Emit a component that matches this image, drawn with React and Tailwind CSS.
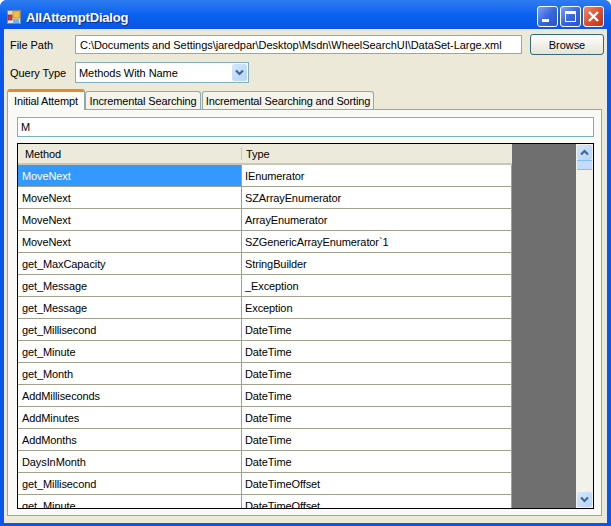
const rows = [
  ["MoveNext", "IEnumerator"],
  ["MoveNext", "SZArrayEnumerator"],
  ["MoveNext", "ArrayEnumerator"],
  ["MoveNext", "SZGenericArrayEnumerator`1"],
  ["get_MaxCapacity", "StringBuilder"],
  ["get_Message", "_Exception"],
  ["get_Message", "Exception"],
  ["get_Millisecond", "DateTime"],
  ["get_Minute", "DateTime"],
  ["get_Month", "DateTime"],
  ["AddMilliseconds", "DateTime"],
  ["AddMinutes", "DateTime"],
  ["AddMonths", "DateTime"],
  ["DaysInMonth", "DateTime"],
  ["get_Millisecond", "DateTimeOffset"],
  ["get_Minute", "DateTimeOffset"],
];

function AppIcon() {
  return (
    <svg width="14" height="14" viewBox="0 0 14 14" className="shrink-0">
      <rect x="0.5" y="0.5" width="13" height="13" fill="#e8e4d8" stroke="#7a86a8" />
      <rect x="1" y="1" width="12" height="3" fill="#f0dca0" />
      <rect x="6" y="1" width="7" height="7" fill="#f2c040" stroke="#b08a20" strokeWidth="0.7" />
      <rect x="1" y="5" width="4" height="5" fill="#d8382c" stroke="#8a2a20" strokeWidth="0.7" />
      <rect x="6" y="9" width="6" height="4" fill="#78b4e8" />
    </svg>
  );
}

function CapButton({ close, children }) {
  return (
    <div
      className={
        "w-[21px] h-[21px] rounded-[3px] border border-white flex items-center justify-center " +
        (close
          ? "bg-gradient-to-br from-[#e88a70] via-[#e0502c] to-[#c03010]"
          : "bg-gradient-to-br from-[#7f9ff0] via-[#3a66e0] to-[#2a50d0]")
      }
    >
      {children}
    </div>
  );
}

export default function App() {
  return (
    <div
      className="w-[611px] h-[526px] overflow-hidden flex flex-col bg-[#0a55ec] rounded-t-[7px] text-[11px] leading-[14px] tracking-[-0.05px] text-black"
      style={{ fontFamily: '"Liberation Sans", Arial, sans-serif' }}
    >
      <div className="h-[29px] shrink-0 flex items-center pl-[7px] pr-[6px] pt-[4px] bg-gradient-to-b from-[#2f7cf0] via-[#0a62f0] to-[#0a55e4]">
        <AppIcon />
        <span
          className="ml-[5px] text-white font-bold text-[13px] tracking-[-0.2px] leading-[16px] flex-1 mt-[2px]"
          style={{ textShadow: "1px 1px 0 #0a2a90" }}
        >
          AllAttemptDialog
        </span>
        <div className="flex gap-[2px] mr-[1px] -mt-[1px]">
          <CapButton>
            <div className="w-[7px] h-[3px] bg-white mt-[9px] mr-[4px]" />
          </CapButton>
          <CapButton>
            <div className="w-[11px] h-[11px] border border-white border-t-[3px]" />
          </CapButton>
          <CapButton close>
            <svg width="13" height="13" viewBox="0 0 13 13">
              <path d="M2 2 L11 11 M11 2 L2 11" stroke="white" strokeWidth="2.4" />
            </svg>
          </CapButton>
        </div>
      </div>

      <div className="ml-[4px] mr-[4px] mb-[3px] flex-1 bg-[#ece9d8] pt-[5px] flex flex-col min-h-0">
        <div className="flex items-center h-[21px] pl-[6px] pr-[3px]">
          <span className="w-[65px]">File Path</span>
          <div className="w-[447px] h-[19px] bg-white border border-[#7fb0ba] flex items-center pl-[4px] whitespace-nowrap">
            C:\Documents and Settings\jaredpar\Desktop\Msdn\WheelSearchUI\DataSet-Large.xml
          </div>
          <div className="ml-[8px] w-[74px] h-[21px] rounded-[3px] border border-[#2f6a80] bg-gradient-to-b from-white to-[#e6e3d6] flex items-center justify-center">
            Browse
          </div>
        </div>

        <div className="flex items-center h-[21px] pl-[6px] mt-[7px]">
          <span className="w-[65px]">Query Type</span>
          <div className="w-[174px] h-[21px] bg-white border border-[#7fb0ba] flex items-center pl-[3px] pr-[1px]">
            <span className="flex-1 whitespace-nowrap">Methods With Name</span>
            <div className="w-[15px] h-[17px] rounded-[2px] bg-gradient-to-br from-[#d5e6fb] to-[#b5d3f8] flex items-center justify-center">
              <svg width="9" height="7" viewBox="0 0 9 7">
                <path d="M1 1.5 L4.5 5 L8 1.5" fill="none" stroke="#3f6a8f" strokeWidth="2.2" />
              </svg>
            </div>
          </div>
        </div>

        <div className="flex items-end h-[20px] mt-[6px] pl-[3px] relative z-10 tracking-[-0.15px]">
          <div className="w-[78px] h-[21px] -mb-px bg-[#fbfbf8] border-x border-[#91a7a8] border-t-[3px] border-t-[#e68b2c] rounded-t-[3px] flex items-center justify-center whitespace-nowrap">
            Initial Attempt
          </div>
          <div className="w-[116px] h-[18px] bg-[#f4f3ec] border border-b-0 border-[#91a7a8] rounded-t-[3px] flex items-center justify-center whitespace-nowrap">
            Incremental Searching
          </div>
          <div className="ml-[1px] w-[172px] h-[18px] bg-[#f4f3ec] border border-b-0 border-[#91a7a8] rounded-t-[3px] flex items-center justify-center whitespace-nowrap">
            Incremental Searching and Sorting
          </div>
        </div>

        <div className="ml-[3px] w-[595px] h-[407px] border border-[#91a7a8] bg-[#f9f9f5] pt-[7px] pl-[9px] flex flex-col">
          <div className="w-[577px] h-[20px] bg-white border border-[#7fb0ba] flex items-center pl-[3px] shrink-0">
            M
          </div>
          <div className="mt-[6px] w-[577px] h-[366px] border border-black flex overflow-hidden bg-[#6f6f6f]">
            <div className="w-[494px] shrink-0 overflow-hidden tracking-[-0.1px]">
              <div className="flex h-[21px] bg-[#ebeadb] border-b-2 border-[#cbc7b8]">
                <div className="w-[224px] pl-[7px] flex items-center border-r border-[#cbc7b8] my-[3px]">Method</div>
                <div className="flex-1 pl-[4px] flex items-center">Type</div>
              </div>
              {rows.map((r, i) => (
                <div key={i} className="flex h-[22px] bg-white border-b border-r border-[#a3a08f]">
                  <div
                    className={
                      "w-[224px] pl-[4px] flex items-center border-r border-[#a3a08f] " +
                      (i === 0 ? "bg-[#3399ff] text-white" : "")
                    }
                  >
                    {r[0]}
                  </div>
                  <div className="flex-1 pl-[3px] flex items-center">{r[1]}</div>
                </div>
              ))}
            </div>
            <div className="w-[64px] shrink-0" />
            <div className="w-[17px] shrink-0 bg-[#f3f2ea] flex flex-col items-center pt-px">
              <div className="w-[15px] h-[15px] rounded-[2px] bg-gradient-to-br from-[#d5e6fb] to-[#b5d3f8] flex items-center justify-center">
                <svg width="9" height="7" viewBox="0 0 9 7">
                  <path d="M1 5.5 L4.5 2 L8 5.5" fill="none" stroke="#3f6a8f" strokeWidth="2.2" />
                </svg>
              </div>
              <div className="w-[15px] h-[10px] bg-[#c5dbfb] border-y border-[#88bdf5]" />
              <div className="flex-1" />
              <div className="w-[15px] h-[15px] mb-px rounded-[2px] bg-gradient-to-br from-[#d5e6fb] to-[#b5d3f8] flex items-center justify-center">
                <svg width="9" height="7" viewBox="0 0 9 7">
                  <path d="M1 1.5 L4.5 5 L8 1.5" fill="none" stroke="#3f6a8f" strokeWidth="2.2" />
                </svg>
              </div>
            </div>
          </div>
        </div>
      </div>
    </div>
  );
}
